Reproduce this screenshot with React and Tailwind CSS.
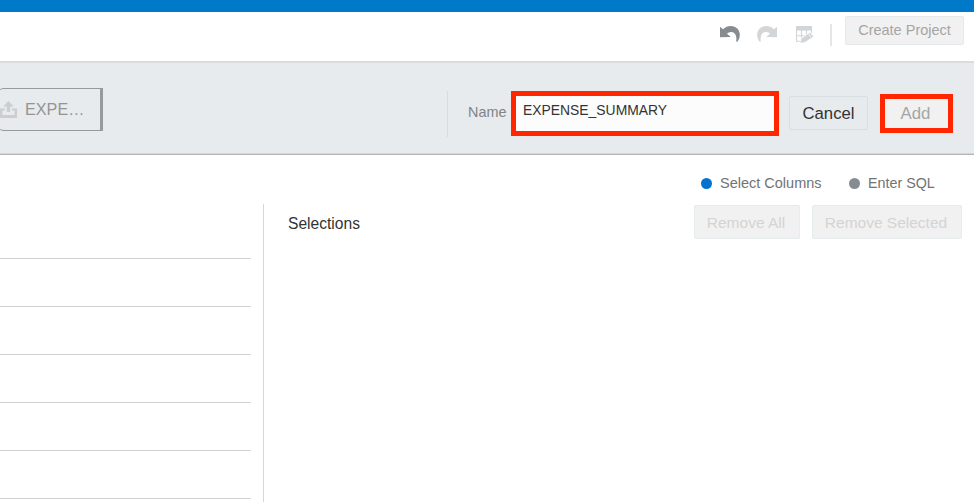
const ROWS = [1, 2, 3, 4, 5];

function CurvedArrow({ className }) {
  return (
    <svg viewBox="0 0 20 16" className={className} fill="currentColor">
      <path d="M0 0.8 L3 3.3 C5 1.2 7.8 0 10.8 0 C16 0 19.8 3.8 19.8 8.8 C19.8 11.8 18.8 14.3 17 16 L16.2 15.6 C17.2 10.2 15 6.2 11.4 6 C9.6 5.9 8 6.7 7 7.8 L10.8 11 L0 11.3 Z" />
    </svg>
  );
}

function EditTable() {
  return (
    <svg viewBox="0 0 18 17" className="h-[17px] w-[18px] text-[#d2d5d7]">
      <rect x="0" y="0" width="16" height="4.6" fill="currentColor" />
      <path d="M0.5 4V15.2H5M15.5 4V7M5.5 4V15M10.5 4V10.5M0 9.8H11.5" fill="none" stroke="currentColor" strokeWidth="1.1" />
      <path d="M4.3 16.8 L5.4 12.7 L13.8 6.4 L17.4 10.4 L8.8 16.2 Z" fill="currentColor" stroke="#fff" strokeWidth="1.4" paintOrder="stroke" />
      <path d="M12.2 7.3 L14.8 10.8" stroke="#fff" strokeWidth="0.8" />
    </svg>
  );
}

function Upload() {
  return (
    <svg viewBox="0 0 17 17" className="h-[17px] w-[17px] shrink-0 text-[#cbcdcf]" fill="currentColor">
      <path d="M8.5 0 L13.8 5.6 H10.2 V11 H6.8 V5.6 H3.2 Z" />
      <path d="M0 7.5 H5 V9.5 H2.4 V14 H14.6 V9.5 H12 V7.5 H17 V17 H0 Z" />
    </svg>
  );
}

export default function App() {
  return (
    <div className="flex h-[502px] w-[974px] flex-col overflow-hidden bg-white font-['Liberation_Sans',Arial,sans-serif] whitespace-nowrap">
      <div className="h-3 shrink-0 bg-[#007ac8]" />

      <header className="flex h-[49px] shrink-0 items-start justify-end pr-[10px]">
        <CurvedArrow className="mt-[14px] h-4 w-5 text-[#868c90]" />
        <CurvedArrow className="mt-[14px] ml-[17px] h-4 w-5 -scale-x-100 text-[#d3d6d8]" />
        <div className="mt-[14px] ml-[19px]">
          <EditTable />
        </div>
        <div className="mt-3 ml-4 h-[22px] w-[2px] bg-[#e3e7ea]" />
        <button className="mt-1 ml-[13px] h-[29px] w-[119px] rounded-[2px] border border-[#e6e9eb] bg-[#f1f1f1] text-[14.5px] leading-[27px] text-[#a5a5a5]">
          Create Project
        </button>
      </header>

      <section className="flex h-[94px] shrink-0 items-start border-t-2 border-b border-t-[#d9dde0] border-b-[#b4b7b9] bg-[#e7ebee] shadow-[inset_0_-1px_0_#d3d6d8]">
        <div className="mt-[25px] -ml-[3px] flex h-[43px] w-[106px] items-center rounded-l-[7px] border-y border-r-[3px] border-[#959a9d] pl-[3px] text-[16.2px] text-[#949494]">
          <Upload />
          <span className="ml-2">EXPE…</span>
        </div>
        <div className="mt-7 ml-[344px] h-[46px] w-px bg-[#d4dde1]" />
        <label className="mt-[38px] ml-5 w-[43px] text-[14.4px] leading-[22px] text-[#808386]">Name</label>
        <div className="mt-7 h-[45px] w-[268px] border-[5px] border-[#ff2600] bg-[#fcfcfc] pl-[7px] text-[13.9px] leading-[29px] text-[#333]">
          EXPENSE_SUMMARY
        </div>
        <button className="mt-[33px] ml-[10px] h-[34px] w-[79px] rounded-[2px] border border-[#d7dfe3] text-[16.7px] leading-[33px] text-[#333]">
          Cancel
        </button>
        <button className="mt-[31px] ml-3 h-[39px] w-[73px] border-[5px] border-[#ff2600] bg-[#f1f1f1] pr-[2px] text-[16.8px] leading-[29px] text-[#a5a5a5]">
          Add
        </button>
      </section>

      <main className="flex min-h-0 flex-1">
        <div className="mt-[49px] w-[263px] shrink-0 pr-3">
          <div className="h-[55px] border-b border-[#cfd1d2]" />
          {ROWS.map((row) => (
            <div key={row} className="h-12 border-b border-[#cfd1d2]" />
          ))}
        </div>
        <div className="mt-[49px] w-px shrink-0 bg-[#cfd9e0]" />
        <div className="flex flex-1 flex-col pr-3 pl-6">
          <div className="mt-[17px] flex h-[23px] items-center justify-end pr-7 text-[14.5px] text-[#737373]">
            <span className="h-[11px] w-[11px] rounded-full bg-[#0572ce]" />
            <span className="ml-2 w-[102px] pt-px">Select Columns</span>
            <span className="ml-[27px] h-[11px] w-[11px] rounded-full bg-[#868c90]" />
            <span className="ml-2 w-[66px] pt-px text-[14.3px]">Enter SQL</span>
          </div>
          <div className="mt-[10px] flex h-[34px] items-center text-[15.6px]">
            <h2 className="mt-1 flex-1 text-[#333]">Selections</h2>
            <button className="h-[34px] w-[106px] rounded-[2px] border border-[#e6ebee] bg-[#f1f1f1] pt-px pr-[2px] text-[15.5px] text-[#d4d4d4]">
              Remove All
            </button>
            <button className="ml-3 h-[34px] w-[150px] rounded-[2px] border border-[#e6ebee] bg-[#f1f1f1] pt-px pr-[2px] text-[15.5px] text-[#d4d4d4]">
              Remove Selected
            </button>
          </div>
        </div>
      </main>
    </div>
  );
}
